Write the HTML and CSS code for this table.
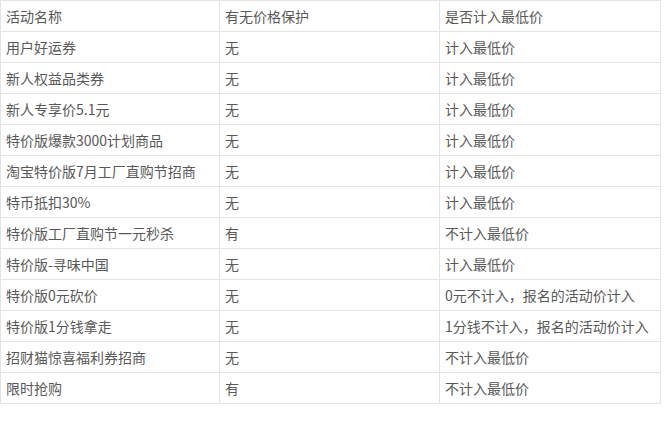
FILE: index.html
```html
<!DOCTYPE html>
<html lang="zh-CN">
<head>
<meta charset="utf-8">
<link rel="stylesheet" href="styles.css">
</head>
<body>
<table class="price-table">
  <colgroup>
    <col class="c1"><col class="c2"><col class="c3">
  </colgroup>
  <tr><td>活动名称</td><td>有无价格保护</td><td>是否计入最低价</td></tr>
  <tr><td>用户好运券</td><td>无</td><td>计入最低价</td></tr>
  <tr><td>新人权益品类券</td><td>无</td><td>计入最低价</td></tr>
  <tr><td>新人专享价5.1元</td><td>无</td><td>计入最低价</td></tr>
  <tr><td>特价版爆款3000计划商品</td><td>无</td><td>计入最低价</td></tr>
  <tr><td>淘宝特价版7月工厂直购节招商</td><td>无</td><td>计入最低价</td></tr>
  <tr><td>特币抵扣30%</td><td>无</td><td>计入最低价</td></tr>
  <tr><td>特价版工厂直购节一元秒杀</td><td>有</td><td>不计入最低价</td></tr>
  <tr><td>特价版-寻味中国</td><td>无</td><td>计入最低价</td></tr>
  <tr><td>特价版0元砍价</td><td>无</td><td>0元不计入，报名的活动价计入</td></tr>
  <tr><td>特价版1分钱拿走</td><td>无</td><td>1分钱不计入，报名的活动价计入</td></tr>
  <tr><td>招财猫惊喜福利券招商</td><td>无</td><td>不计入最低价</td></tr>
  <tr><td>限时抢购</td><td>有</td><td>不计入最低价</td></tr>
</table>
</body>
</html>
```
FILE: styles.css
```css
html, body {
  margin: 0;
  padding: 0;
  background: #ffffff;
}
.price-table {
  border-collapse: collapse;
  table-layout: fixed;
  width: 660px;
  font-family: "Noto Sans CJK SC", "Noto Sans", sans-serif;
  font-size: 14px;
  color: #595959;
}
.c1 { width: 219px; }
.c2 { width: 220px; }
.c3 { width: 221px; }
.price-table td {
  border: 1px solid #e3e3e3;
  height: 30px;
  padding: 0 0 0 5px;
  box-sizing: border-box;
  line-height: 30px;
  white-space: nowrap;
  vertical-align: middle;
}
```
